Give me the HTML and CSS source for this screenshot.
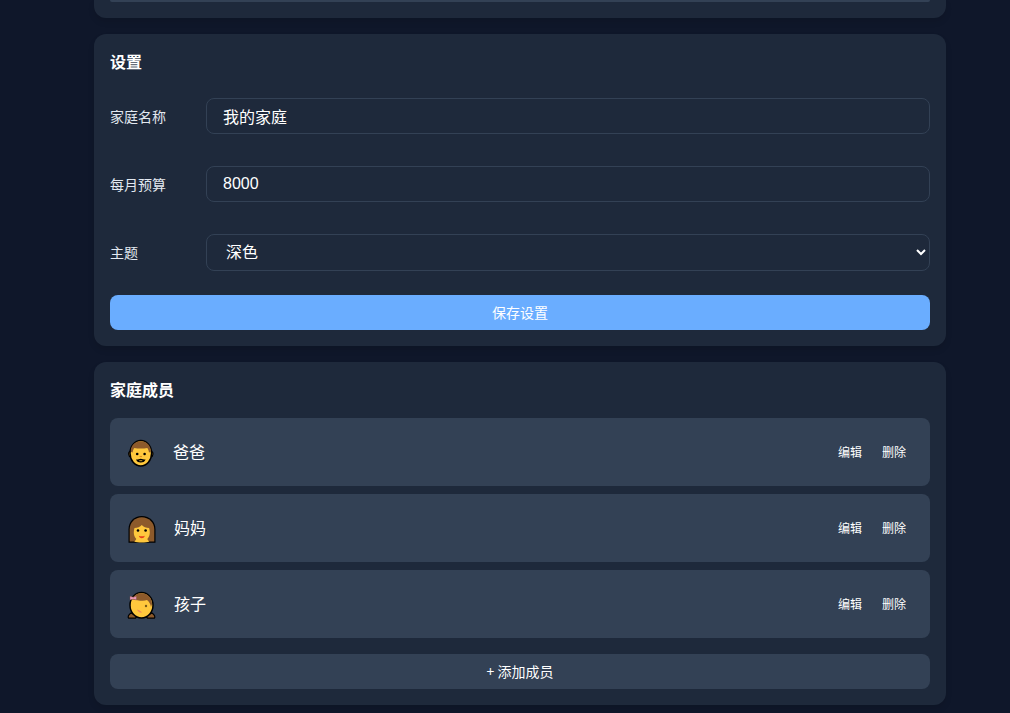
FILE: index.html
```html
<!DOCTYPE html>
<html lang="zh-CN">
<head>
<meta charset="utf-8">
<title>设置</title>
<link rel="stylesheet" href="styles.css">
</head>
<body>
<main class="page">
  <section class="card card-stub"><div class="stub-bar"></div></section>

  <section class="card">
    <h2 class="card-title">设置</h2>
    <div class="form">
      <div class="form-row">
        <label class="form-label">家庭名称</label>
        <input class="form-input" type="text" value="我的家庭">
      </div>
      <div class="form-row">
        <label class="form-label">每月预算</label>
        <input class="form-input" type="text" value="8000">
      </div>
      <div class="form-row form-row-select">
        <label class="form-label">主题</label>
        <select class="form-input form-select"><option>深色</option></select>
      </div>
    </div>
    <button class="btn btn-primary">保存设置</button>
  </section>

  <section class="card">
    <h2 class="card-title">家庭成员</h2>
    <ul class="member-list">
      <li class="member">
        <svg class="avatar" viewBox="0 0 30 30" aria-hidden="true">
          <path d="M4.300 14.500c-2.300.3-2.300 5 .7 5.500M25.300 14.500c2.300.3 2.300 5-.7 5.500" fill="#e8a02c" stroke="#000" stroke-width="1.200"/>
          <ellipse cx="14.800" cy="16.300" rx="10.800" ry="12.700" fill="#ffc83d" stroke="#000" stroke-width="1.500"/>
          <path d="M4.800 14.800C4.500 8.500 8.800 4.300 14.800 4.300s10.300 4.200 10 10.500l-1.800.7c-.3-2-.8-3.500-1.800-4.500-3.500.8-9.300.8-12.800 0-1 1-1.500 2.500-1.800 4.500z" fill="#8d5a2b"/>
          <circle cx="11.200" cy="17" r="1.300" fill="#000"/>
          <circle cx="18.600" cy="17" r="1.300" fill="#000"/>
          <path d="M13.600 19.500h2.400" stroke="#e0941f" stroke-width="1.200"/>
          <path d="M10 22.500c1.800.1 3.300-.8 4.800-.8s3 .9 4.800.8c-1 2.400-2.800 3-4.800 3s-3.800-.6-4.800-3z" fill="#000"/>
          <path d="M13.300 23.700h3" stroke="#ffc83d" stroke-width=".8"/>
        </svg>
        <span class="member-name">爸爸</span>
        <div class="member-actions">
          <button class="btn-link">编辑</button>
          <button class="btn-link">删除</button>
        </div>
      </li>
      <li class="member">
        <svg class="avatar" viewBox="0 0 30 30" aria-hidden="true">
          <path d="M2.500 29.700V16.500C2.500 8.500 8 3 15.800 3S29.500 8.500 29.500 16.500v13.200z" fill="#000"/>
          <path d="M3.700 28.500V16.500C3.700 9.200 9 4.200 15.800 4.200S28.300 9.200 28.300 16.500v12z" fill="#8d5a2b"/>
          <path d="M8.300 28.500c1-.8 1.700-1.700 2-2.500-1.700-1.800-2.500-4-2.500-6.500 0-1.500.2-3 .7-4.500 3 0 5.700-1.200 7.300-3 1.600 1.800 4.300 3 7.300 3 .5 1.500.7 3 .7 4.500 0 2.500-.8 4.700-2.500 6.500.3.800 1 1.700 2 2.500-1.500.6-4.500 1-7.500 1s-6-.4-7.500-1z" fill="#ffc83d"/>
          <circle cx="12" cy="17.500" r="1.300" fill="#000"/>
          <circle cx="19.600" cy="17.500" r="1.300" fill="#000"/>
          <path d="M12.800 22.800c1.900.7 4.100.7 6 0-.6 1.800-1.700 2.400-3 2.400s-2.400-.6-3-2.400z" fill="#e8401c"/>
        </svg>
        <span class="member-name">妈妈</span>
        <div class="member-actions">
          <button class="btn-link">编辑</button>
          <button class="btn-link">删除</button>
        </div>
      </li>
      <li class="member">
        <svg class="avatar" viewBox="0 0 30 30" aria-hidden="true">
          <path d="M5 24c-2.500 1.800-3.500 3.800-2.400 5.200h6.900L11 27zM26 24c2.500 1.800 3.500 3.800 2.400 5.200h-6.900L20 27z" fill="#8d5a2b" stroke="#000" stroke-width="1.200"/>
          <ellipse cx="15.500" cy="16.300" rx="11.500" ry="12.700" fill="#ffc83d" stroke="#000" stroke-width="1.500"/>
          <path d="M5.500 11C8 6 11.500 4.300 15.500 4.300c6 0 10.500 4.200 10.500 10.700l-1 3c-.5-3-2-5.500-4-7-3.500 1.500-9 .5-15.500-.8z" fill="#8d5a2b"/>
          <path d="M4 7.300l3.400 1 3-1.300v4l-3-.9-3.400.8z" fill="#ef9ab8" stroke="#7b4b45" stroke-width=".4"/>
          <circle cx="20" cy="17" r="1.200" fill="#7a5a18"/>
          <path d="M11 20.500c2 .5 3.800 1.500 5.200 3-2.200.4-4.300-.6-5.200-3z" fill="#f0885c"/>
        </svg>
        <span class="member-name">孩子</span>
        <div class="member-actions">
          <button class="btn-link">编辑</button>
          <button class="btn-link">删除</button>
        </div>
      </li>
    </ul>
    <button class="btn btn-secondary">+ 添加成员</button>
  </section>
</main>
</body>
</html>
```

FILE: styles.css
```css
* {
  box-sizing: border-box;
}

html,
body {
  margin: 0;
  height: 713px;
  overflow: hidden;
  background: #0f172a;
}

body {
  color: #ffffff;
  font-family: "Noto Sans CJK SC", "Liberation Sans", sans-serif;
  font-size: 14px;
}

.page {
  width: 852px;
  margin-left: 94px;
  display: flex;
  flex-direction: column;
  gap: 16px;
}

.card {
  background: #1e293b;
  border-radius: 12px;
  padding: 16px;
  box-shadow: 0 4px 6px rgba(0, 0, 0, 0.1);
}

.card-stub {
  height: 18px;
  padding: 0 16px;
  border-radius: 0 0 12px 12px;
}

.stub-bar {
  height: 2px;
  background: #334155;
  border-radius: 0 0 8px 8px;
}

.card-title {
  margin: 0 0 16px;
  height: 24px;
  font-size: 16px;
  line-height: 22px;
  font-weight: 700;
}

.form {
  display: flex;
  flex-direction: column;
  gap: 32px;
  padding: 8px 0 24px;
}

.form-row {
  display: flex;
  align-items: center;
}

.form-label {
  flex: 0 0 96px;
  color: #e2e8f0;
  font-size: 14px;
}

.form-row-select .form-label {
  padding-bottom: 2px;
}

.form-input {
  flex: 1;
  height: 36px;
  padding: 0 16px;
  background: #1e293b;
  border: 1px solid #334155;
  border-radius: 8px;
  color: #ffffff;
  font-family: "Liberation Sans", "Noto Sans CJK SC", sans-serif;
  font-size: 16px;
}

.form-select {
  height: 37px;
  padding: 0 1px 0 15px;
}

.btn {
  display: block;
  width: 100%;
  height: 35px;
  padding: 0 0 2px;
  border: 0;
  border-radius: 8px;
  color: #ffffff;
  font-family: inherit;
  font-size: 14px;
}

.btn-primary {
  background: #6aadff;
}

.btn-secondary {
  background: #334155;
}

.member-list {
  list-style: none;
  margin: 0 0 16px;
  padding: 0;
  display: flex;
  flex-direction: column;
  gap: 8px;
}

.member {
  display: flex;
  align-items: center;
  height: 68px;
  padding: 0 16px;
  background: #334155;
  border-radius: 8px;
}

.avatar {
  flex: none;
  width: 30px;
  height: 30px;
  margin-right: 17px;
}

.member + .member .avatar {
  margin-right: 18px;
}

.member-name {
  flex: 1;
  padding-bottom: 2px;
  font-size: 16px;
}

.member-actions {
  display: flex;
  gap: 4px;
}

.btn-link {
  padding: 3px 8px 5px;
  background: none;
  border: 0;
  color: #ffffff;
  font-family: inherit;
  font-size: 12px;
}
```
